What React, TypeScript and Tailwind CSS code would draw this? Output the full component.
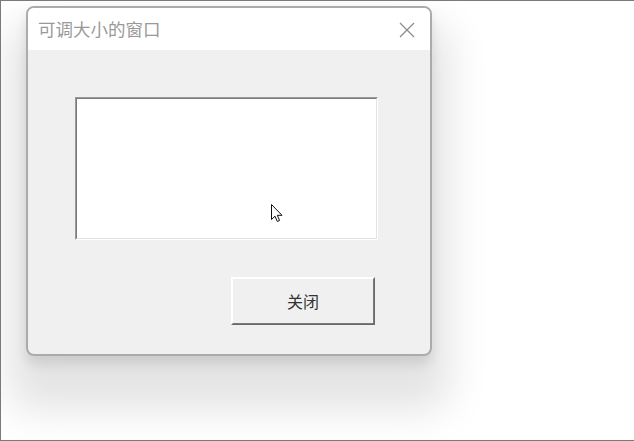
import React from "react";

const font = { fontFamily: '"Noto Sans CJK SC", "Microsoft YaHei", sans-serif' };

export default function App() {
  return (
    <div
      className="h-[441px] w-[634px] overflow-hidden border-t border-l border-b border-[#7a7a7a] bg-white pl-[25px] pt-[5px]"
      style={font}
    >
      {/* Window */}
      <div className="flex h-[350px] w-[406px] flex-col overflow-hidden rounded-[8px] border-2 border-[#ababab] bg-[#f0f0f0] shadow-[0_36px_40px_18px_rgba(0,0,0,0.11),0_8px_12px_rgba(0,0,0,0.1)]">
        {/* Title bar */}
        <div className="flex h-[42px] shrink-0 items-center justify-between bg-white pl-[10px] pr-[15px]">
          <span className="text-[17.5px] leading-none text-[#999]">可调大小的窗口</span>
          <svg width="16" height="16" viewBox="0 0 16 16" className="mt-[1px]">
            <path d="M1 1 L15 15 M15 1 L1 15" stroke="#8a8a8a" strokeWidth="1.2" fill="none" />
          </svg>
        </div>

        {/* Client area */}
        <div className="flex flex-1 flex-col pl-[47px] pt-[47px]">
          {/* Sunken edit box */}
          <div className="h-[143px] w-[303px] border border-t-[#9a9a9a] border-l-[#9a9a9a] border-b-white border-r-white">
            <div className="relative h-full w-full border border-t-[#7a7a7a] border-l-[#7a7a7a] border-b-[#e3e3e3] border-r-[#e3e3e3] bg-white">
              <svg
                width="13"
                height="19"
                viewBox="0 0 13 19"
                className="absolute left-[194px] top-[105px]"
              >
                <path
                  d="M0.5 0.5 L0.5 15.5 L4 12.2 L6.3 17.5 L8.6 16.5 L6.3 11.3 L11 11.3 Z"
                  fill="white"
                  stroke="#111"
                  strokeWidth="1"
                  strokeLinejoin="miter"
                />
              </svg>
            </div>
          </div>

          {/* Raised button */}
          <div className="ml-[156px] mt-[37px] h-[48px] w-[144px] border border-t-white border-l-white border-b-[#696969] border-r-[#696969]">
            <div className="flex h-full w-full items-center justify-center border border-t-white border-l-white border-b-[#7a7a7a] border-r-[#7a7a7a] bg-[#f0f0f0] text-[16px] text-[#333]">
              关闭
            </div>
          </div>
        </div>
      </div>
    </div>
  );
}
